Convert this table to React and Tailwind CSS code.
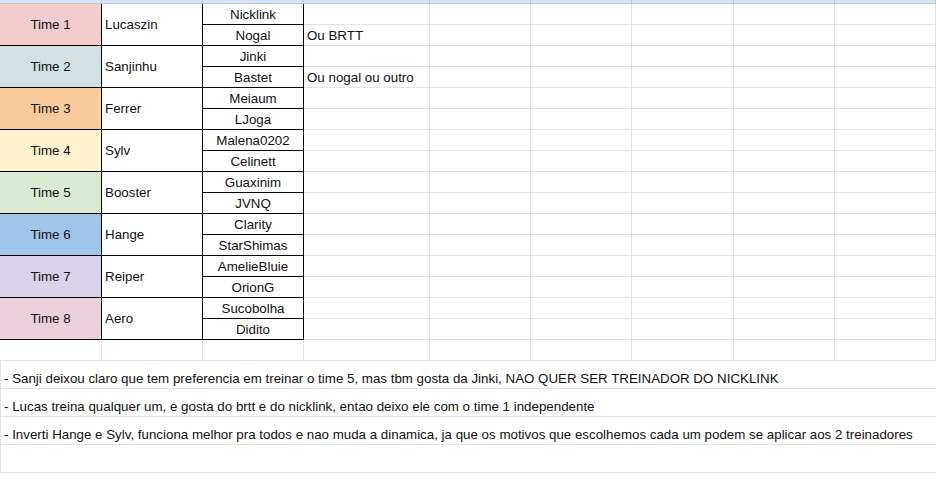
const teams = [
  { name: "Time 1", coach: "Lucaszin", bg: "bg-[#f4cccc]", players: ["Nicklink", "Nogal"], notes: ["", "Ou BRTT"] },
  { name: "Time 2", coach: "Sanjinhu", bg: "bg-[#d0e0e3]", players: ["Jinki", "Bastet"], notes: ["", "Ou nogal ou outro"] },
  { name: "Time 3", coach: "Ferrer", bg: "bg-[#f9cb9c]", players: ["Meiaum", "LJoga"], notes: ["", ""] },
  { name: "Time 4", coach: "Sylv", bg: "bg-[#fff2cc]", players: ["Malena0202", "Celinett"], notes: ["", ""] },
  { name: "Time 5", coach: "Booster", bg: "bg-[#d9ead3]", players: ["Guaxinim", "JVNQ"], notes: ["", ""] },
  { name: "Time 6", coach: "Hange", bg: "bg-[#9fc5e8]", players: ["Clarity", "StarShimas"], notes: ["", ""] },
  { name: "Time 7", coach: "Reiper", bg: "bg-[#d9d2e9]", players: ["AmelieBluie", "OrionG"], notes: ["", ""] },
  { name: "Time 8", coach: "Aero", bg: "bg-[#ead1dc]", players: ["Sucobolha", "Didito"], notes: ["", ""] },
];

const notes = [
  "- Sanji deixou claro que tem preferencia em treinar o time 5, mas tbm gosta da Jinki, NAO QUER SER TREINADOR DO NICKLINK",
  "- Lucas treina qualquer um, e gosta do brtt e do nicklink, entao deixo ele com o time 1 independente",
  "- Inverti Hange e Sylv, funciona melhor pra todos e nao muda a dinamica, ja que os motivos que escolhemos cada um podem se aplicar aos 2 treinadores",
  "",
];

const gray = "border-r border-b border-[#e2e2e2]";
const black = "border-r border-b border-black";
const cols = "grid grid-cols-[102px_101px_101px_126px_101px_101px_102px_101px_101px]";

function EmptyCells({ n }) {
  return Array.from({ length: n }).map((_, i) => <div key={i} className={gray} />);
}

export default function App() {
  return (
    <div
      className="w-[936px] h-[480px] overflow-hidden bg-white text-[13.333px] leading-[16px] text-[#111]"
      style={{ fontFamily: '"Liberation Sans", Arial, sans-serif' }}
    >
      {/* column header strip */}
      <div className={`${cols} h-[4px] bg-[#d3e3fd] border-b border-[#c4c7c5]`}>
        {Array.from({ length: 9 }).map((_, i) => (
          <div key={i} className="border-r border-[#c4c7c5]" />
        ))}
      </div>

      <div className={`${cols} auto-rows-[21px]`}>
        {teams.map((t) => [
          <div key={t.name + "a"} className={`row-span-2 ${black} ${t.bg} flex items-center justify-center`}>
            {t.name}
          </div>,
          <div key={t.name + "b"} className={`row-span-2 ${black} flex items-center pl-[3px]`}>
            {t.coach}
          </div>,
          ...t.players.map((p, i) => [
            <div key={p} className={`${black} flex items-end justify-center pb-[1px]`}>
              {p}
            </div>,
            <div key={p + "d"} className={`${gray} flex items-end pl-[3px] pb-[1px] whitespace-nowrap`}>
              {t.notes[i]}
            </div>,
            <EmptyCells key={p + "e"} n={5} />,
          ]),
        ])}
        <EmptyCells n={9} />
      </div>

      {notes.map((n, i) => (
        <div
          key={i}
          className="h-[28px] border-l border-b border-[#e2e2e2] flex items-end pl-[3px] pb-[1px] whitespace-nowrap"
        >
          {n}
        </div>
      ))}
    </div>
  );
}
